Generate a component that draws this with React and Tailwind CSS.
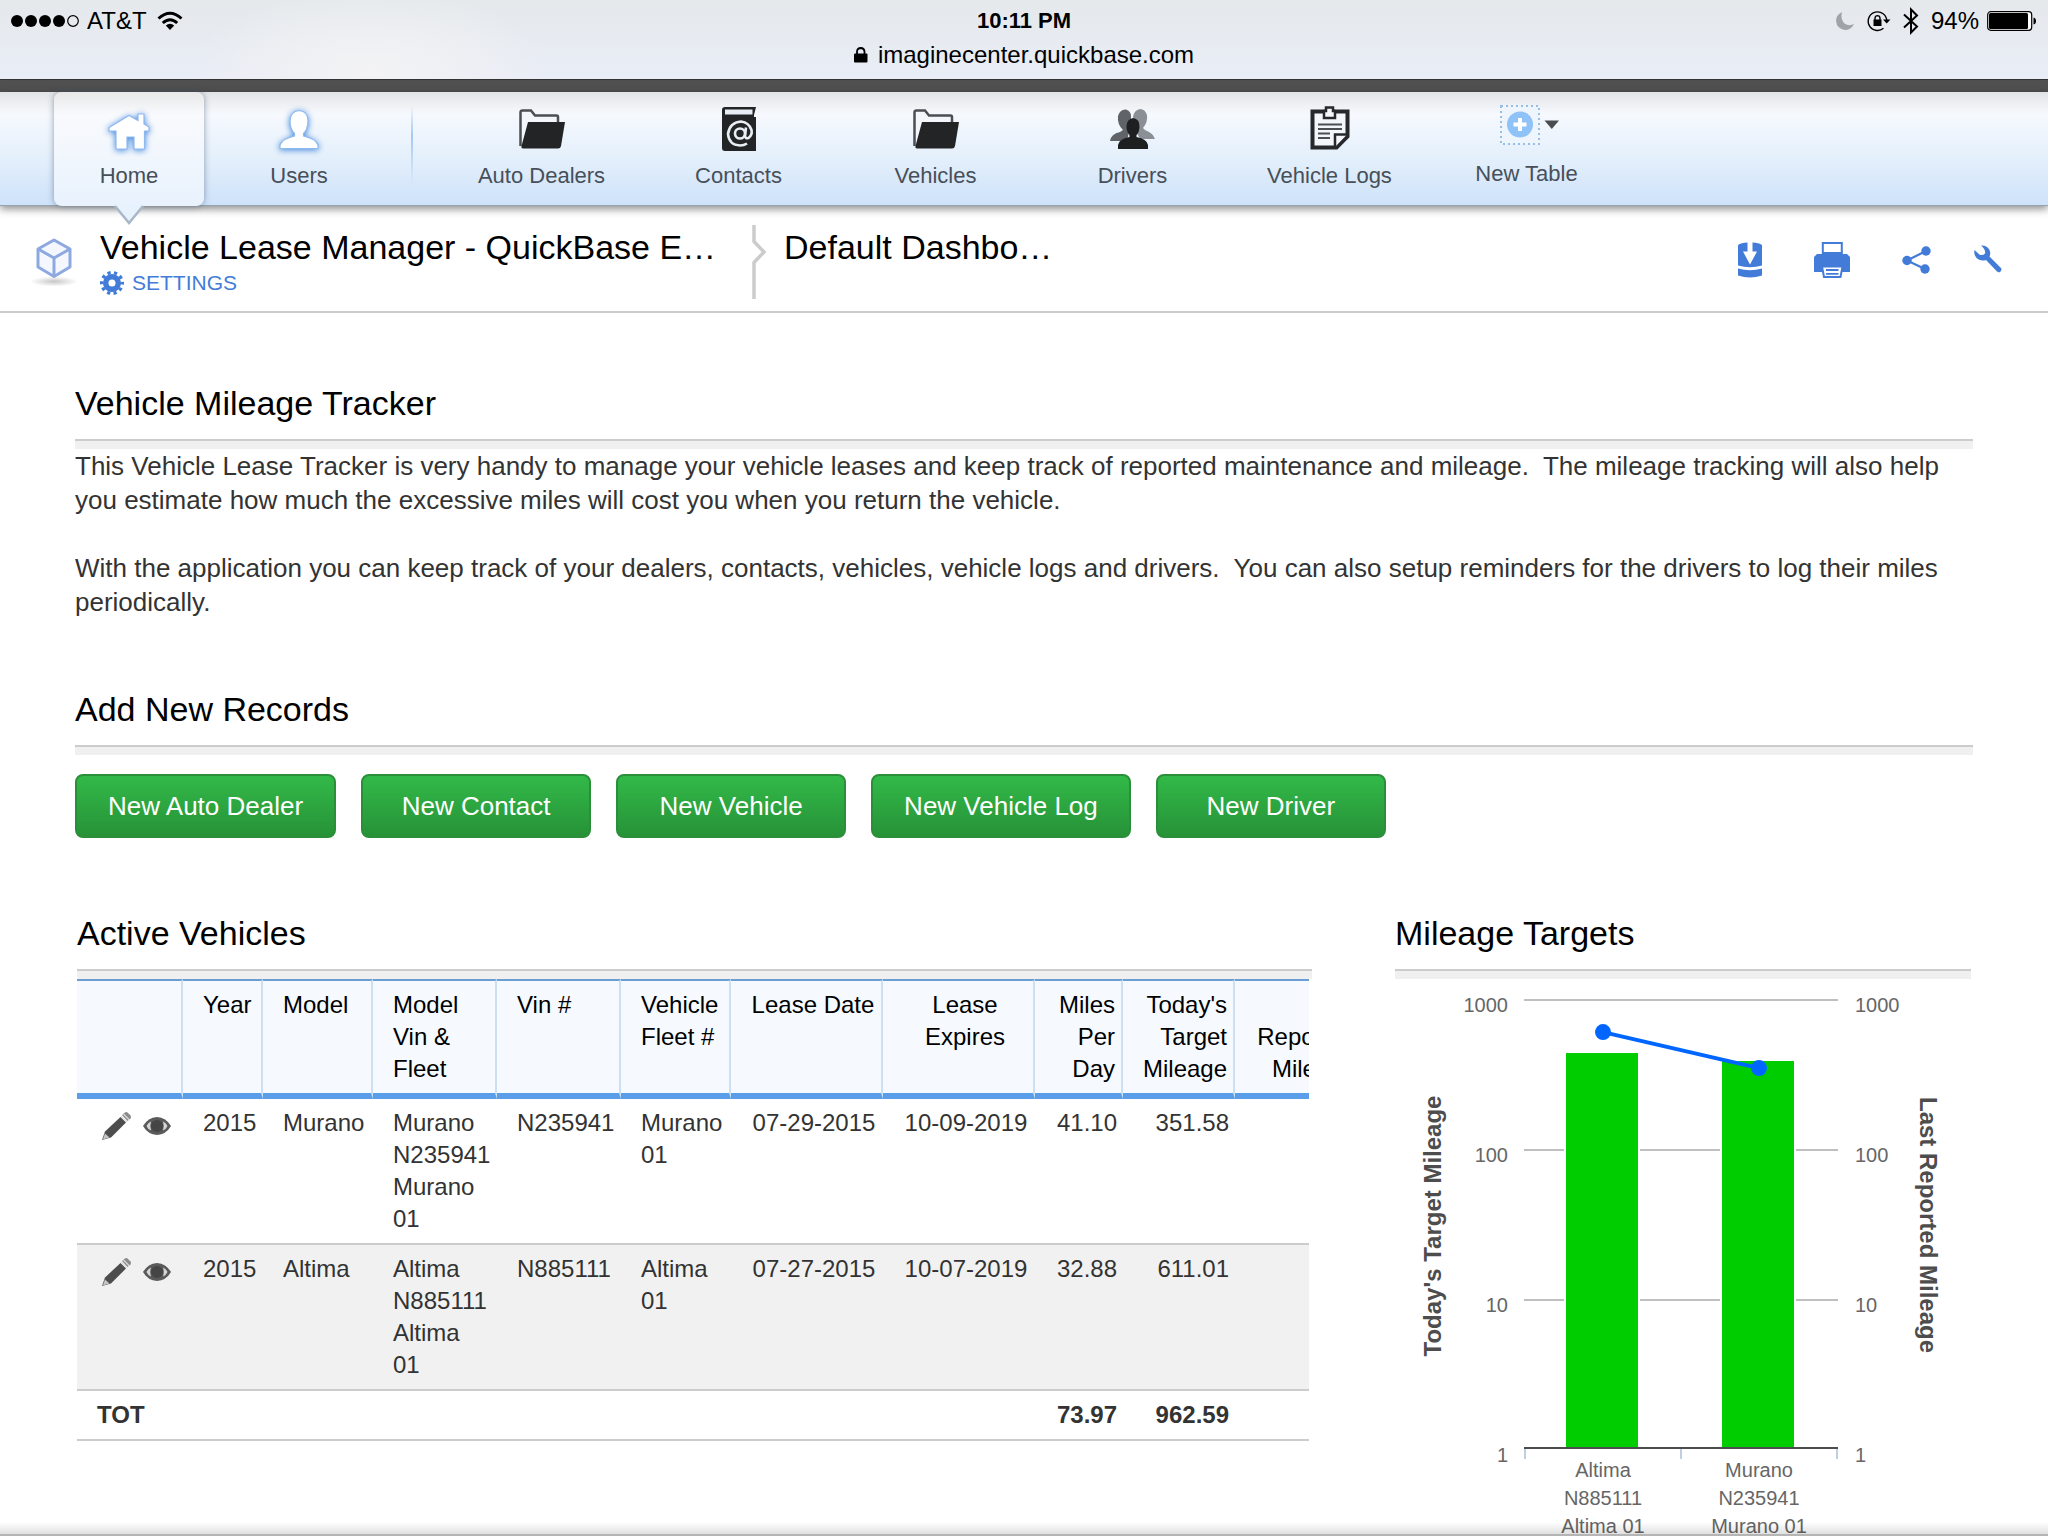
const tables = [
  { name: 'Auto Dealers', icon: 'folder' },
  { name: 'Contacts', icon: 'contacts' },
  { name: 'Vehicles', icon: 'folder' },
  { name: 'Drivers', icon: 'people' },
  { name: 'Vehicle Logs', icon: 'clipboard' },
];

const newRecords = ['New Auto Dealer', 'New Contact', 'New Vehicle', 'New Vehicle Log', 'New Driver'];

const columns = [
  { label: '', width: 106, align: 'text-left' },
  { label: 'Year', width: 80, align: 'text-left' },
  { label: 'Model', width: 110, align: 'text-left' },
  { label: 'Model Vin & Fleet', width: 124, align: 'text-left' },
  { label: 'Vin #', width: 124, align: 'text-left' },
  { label: 'Vehicle Fleet #', width: 110, align: 'text-left' },
  { label: 'Lease Date', width: 152, align: 'text-center' },
  { label: 'Lease Expires', width: 152, align: 'text-center' },
  { label: 'Miles Per Day', width: 88, align: 'text-right' },
  { label: "Today's Target Mileage", width: 112, align: 'text-right' },
  { label: 'Last Reported Mileage', width: 129, align: 'text-right' },
];

const vehicles = [
  ['2015', 'Murano', 'Murano N235941 Murano 01', 'N235941', 'Murano 01', '07-29-2015', '10-09-2019', '41.10', '351.58', ''],
  ['2015', 'Altima', 'Altima N885111 Altima 01', 'N885111', 'Altima 01', '07-27-2015', '10-07-2019', '32.88', '611.01', ''],
];

const chartData = [
  { labels: ['Altima', 'N885111', 'Altima 01'], x: 208, reported: 443, target: 611.01 },
  { labels: ['Murano', 'N235941', 'Murano 01'], x: 364, reported: 392, target: 351.58 },
];

// log scale, 150 units for each decade
const scaleY = (value) => 471 - Math.log10(value) * 150;

const FolderIcon = () => (
  <svg width="48" height="48" viewBox="0 0 48 48">
    <path d="M2.500 41V7.500Q2.500 5.500 4.500 5.500H13L17 10.500H38.500Q40 10.500 40 12V18" fill="#f3f7fc" stroke="#4b4e52" strokeWidth="2.500" />
    <path d="M10 17H47L43 41Q42.500 43.500 40 43.500H5Q3 43.500 3.500 41Z" fill="#222426" />
  </svg>
);

const ContactsIcon = () => (
  <svg width="48" height="48" viewBox="0 0 48 48">
    <path d="M7 5Q7 2 10 2H41L39 10V12H41V46H10Q7 46 7 43Z" fill="#222426" />
    <path d="M10 4.500H37.500V9.500H10Z" fill="#e9eef5" />
    <g fill="none" stroke="#e9eef5" strokeWidth="2.600">
      <circle cx="25" cy="28.500" r="5" />
      <path d="M31 22.500L30 31Q30.500 34 33.500 33Q37.500 30 36.500 25Q34 17.500 26 16.500Q14.500 17.500 13 29Q14 40 25 40.500Q29 40.500 32 38.500" />
    </g>
  </svg>
);

const PeopleIcon = () => (
  <svg width="48" height="48" viewBox="0 0 48 48">
    <path d="M1 36Q2 29 11 27L14 25Q8 19 9 11Q11 4 17 4.500Q23 6 22 14L20 27L18 36Z" fill="#606469" />
    <path d="M46 34Q44 28 36 25L34 23Q39 17 38 10Q36 4 31 4Q25 5 24 12L27 26L31 34Z" fill="#8b9096" />
    <path d="M24 13Q31 14 30.500 22Q30 28 27.500 30V32Q38 34 39 40V44H9V40Q10 34 20.500 32V30Q17.500 27 17.500 21Q18 14 24 13Z" fill="#1d1f21" />
  </svg>
);

const ClipboardIcon = () => (
  <svg width="48" height="48" viewBox="0 0 48 48">
    <path d="M6.500 6.500H41.500V31.500L30.500 42.500H6.500Z" fill="#f3f7fc" stroke="#26282b" strokeWidth="4" />
    <path d="M29 42V29.500H41" fill="#f3f7fc" stroke="#26282b" strokeWidth="2.500" />
    <path d="M20 4V2.500H27V6H29V13H18V6H20Z" fill="#f3f7fc" stroke="#26282b" strokeWidth="2.500" />
    <path d="M12 19.500H36M12 24H36M12 28.500H24M12 33H24" stroke="#4b4e52" strokeWidth="2.200" />
  </svg>
);

const HomeIcon = () => (
  <svg width="48" height="48" viewBox="0 0 48 48" className="drop-shadow-[0_1px_3px_#3f86da]">
    <path d="M24 10.500L33 15.500V9H39V19L44 22V26H39.500V44H29V32H22V44H11V26H4V22.500Z" fill="#fff" stroke="#8fbaf0" strokeWidth="1.200" />
  </svg>
);

const UserIcon = () => (
  <svg width="48" height="48" viewBox="0 0 48 48" className="drop-shadow-[0_1px_3px_#3f86da]">
    <path d="M24 5.500Q33.500 6.500 33 16.500Q32.500 25 28.500 28.500V31Q41 34 43 40V43.500H5V40Q7 34 19.500 31V28.500Q15 24 15 16.500Q15 6.500 24 5.500Z" fill="#fff" stroke="#8fbaf0" strokeWidth="1.200" />
  </svg>
);

const icons = {
  folder: FolderIcon,
  contacts: ContactsIcon,
  people: PeopleIcon,
  clipboard: ClipboardIcon,
};

const StatusBar = () => (
  <div className="h-[79px] shrink-0 bg-[radial-gradient(ellipse_180px_80px_at_370px_70px,#f3f3f4,transparent),linear-gradient(#e5e9ec,#e9edf6)] px-[11px] pt-[6px] text-black">
    <div className="grid grid-cols-3 items-center leading-[30px]">
      <div className="flex items-center">
        <svg width="68" height="14" viewBox="0 0 68 14">
          {[6, 20, 34, 48].map((cx) => (
            <circle key={cx} cx={cx} cy="7" r="6" />
          ))}
          <circle cx="62" cy="7" r="5.300" fill="none" stroke="#000" strokeWidth="1.200" />
        </svg>
        <span className="ml-2 text-[24px]">AT&amp;T</span>
        <svg className="ml-[10px]" width="26" height="20" viewBox="0 0 26 20">
          <g fill="none" stroke="#000" strokeWidth="3">
            <path d="M1.500 7.500Q13 -3 24.500 7.500" />
            <path d="M5.800 12Q13 5.400 20.200 12" />
          </g>
          <path d="M8.800 14.500Q13 11 17.200 14.500L13 19Z" />
        </svg>
      </div>
      <div className="text-center text-[22px] font-bold">10:11 PM</div>
      <div className="flex items-center justify-end">
        <svg width="20" height="20" viewBox="0 0 20 20">
          <path d="M7 1Q1 4 1 10Q2 18 10 19Q16 19 19 13Q14 15.500 9.500 12.500Q5 8 7 1Z" fill="#a0a4a9" />
        </svg>
        <svg className="ml-3" width="24" height="22" viewBox="0 0 24 22">
          <path d="M16.500 18.300A9.300 9.300 0 1 1 19.800 11" fill="none" stroke="#000" strokeWidth="1.400" />
          <path d="M16 9.500H23.500L19.700 13.500Z" />
          <path d="M6.500 9.500H14.500V16H6.500Z" />
          <path d="M8 10V8Q8.200 5.700 10.500 5.600Q12.800 5.700 13 8V10" fill="none" stroke="#000" strokeWidth="1.400" />
        </svg>
        <svg className="ml-3" width="16" height="28" viewBox="0 0 16 28">
          <path d="M1 7.500L14 19.500L8 25.500V2.500L14 8.500L1 20.500" fill="none" stroke="#000" strokeWidth="2" />
        </svg>
        <span className="ml-3 text-[24px]">94%</span>
        <svg className="ml-2" width="50" height="20" viewBox="0 0 50 20">
          <rect x="0.700" y="0.700" width="44" height="18.600" rx="3" fill="#fff" stroke="#000" strokeWidth="1.200" />
          <rect x="2" y="2" width="39" height="16" rx="1.500" />
          <path d="M46.500 6.500Q49 7 49 10Q49 13 46.500 13.500Z" />
        </svg>
      </div>
    </div>
    <div className="mt-1 flex items-center justify-center gap-[10px] text-[24px] leading-[30px]">
      <svg width="14" height="16" viewBox="0 0 14 16">
        <rect y="6.500" width="13.500" height="9" rx="1" />
        <path d="M3 7V4.500Q3.200 1.200 6.800 1Q10.300 1.200 10.500 4.500V7" fill="none" stroke="#000" strokeWidth="1.800" />
      </svg>
      imaginecenter.quickbase.com
    </div>
  </div>
);

const NavBar = () => (
  <nav className="relative z-10 flex h-[114px] shrink-0 border-b border-[#98a3b1] bg-[linear-gradient(#e2e3e5,#ecedf0_8%,#f6f9fe_20%,#e3effb_60%,#cee2fa)] pl-[54px] text-[22px] leading-[28px] text-[#474f59] shadow-[0_3px_8px_rgba(0,0,0,0.45)]">
    <a
      href="#home"
      className="relative flex h-[114px] w-[150px] flex-col items-center gap-[9px] rounded-[8px] bg-[linear-gradient(#e8e8e9,#f9fafd_20%,#e8f2fd)] pt-[13px] shadow-[0_0_6px_rgba(60,80,110,0.55)]"
    >
      <HomeIcon />
      Home
      <svg className="absolute top-[113px] left-[60px]" width="30" height="20" viewBox="0 0 30 20">
        <path d="M0 0L15 18L30 0Z" fill="#e8f2fd" />
        <path d="M1 1L15 18L29 1" fill="none" stroke="#a9b8c9" strokeWidth="2.500" />
      </svg>
    </a>
    <a href="#users" className="ml-5 flex w-[150px] flex-col items-center gap-[9px] pt-[13px]">
      <UserIcon />
      Users
    </a>
    <div className="mt-[13px] mr-[30px] ml-[37px] h-[80px] w-[2px] bg-[linear-gradient(transparent,#a4c8ef_40%,transparent)]" />
    {tables.map(({ name, icon }) => {
      const Icon = icons[icon];
      return (
        <a key={name} href="#table" className="flex w-[197px] flex-col items-center gap-[9px] pt-[13px]">
          <Icon />
          {name}
        </a>
      );
    })}
    <button type="button" className="flex w-[197px] flex-col items-center gap-[9px] pt-[13px]">
      <svg width="64" height="46" viewBox="-4 0 64 46">
        <rect x="2" y="1" width="38" height="38" fill="#eef5fd" stroke="#94bfe9" strokeWidth="2" strokeDasharray="2 3" />
        <circle cx="21" cy="19.500" r="13" fill="#8fc2f6" />
        <path d="M21 13V26M14.500 19.500H27.500" stroke="#fff" strokeWidth="4" />
        <path d="M45.500 15.500H60L52.800 24Z" fill="#4a4d50" />
      </svg>
      New Table
    </button>
  </nav>
);

const TitleBar = () => (
  <header className="flex h-[107px] shrink-0 items-start border-b-2 border-[#ccc] bg-white pr-[46px] pl-[30px]">
    <svg className="mt-[31px]" width="48" height="50" viewBox="0 0 48 50">
      <defs>
        <radialGradient id="floor">
          <stop offset="0" stopColor="#000" stopOpacity="0.220" />
          <stop offset="1" stopColor="#000" stopOpacity="0" />
        </radialGradient>
      </defs>
      <ellipse cx="24" cy="44.500" rx="24" ry="5" fill="url(#floor)" />
      <g fill="#f4f8fe" stroke="#8ea9e0" strokeWidth="3" strokeLinejoin="round">
        <path d="M24 3L40 12V30L24 39.500L8 30V12Z" />
        <path d="M24 39V21L9 12.500M24 21L39 12.500" fill="none" />
      </g>
    </svg>
    <div className="mt-[21px] ml-[22px] w-[652px]">
      <h1 className="truncate text-[34px] leading-[40px] text-black">Vehicle Lease Manager - QuickBase E…</h1>
      <a href="#settings" className="mt-[2px] flex items-center gap-2 text-[21px] leading-[28px] text-[#427cd8]">
        <svg width="24" height="24" viewBox="0 0 24 24">
          <circle cx="12" cy="12" r="6.300" fill="none" stroke="#427cd8" strokeWidth="5.500" />
          <circle cx="12" cy="12" r="10.300" fill="none" stroke="#427cd8" strokeWidth="3.400" strokeDasharray="3.200 3.272" strokeDashoffset="1.600" />
        </svg>
        SETTINGS
      </a>
    </div>
    <svg className="mt-[19px]" width="16" height="74" viewBox="0 0 16 74">
      <path d="M2 0V16.500L12 27L2 37.500V74" fill="none" stroke="#ccc" strokeWidth="3.500" />
    </svg>
    <h2 className="mt-[21px] ml-4 text-[34px] leading-[40px] text-black">Default Dashbo…</h2>
    <div className="mt-[36px] ml-auto flex items-center gap-[52px]">
      <button type="button" aria-label="Download">
        <svg width="24" height="36" viewBox="0 0 24 36" fill="#427cd8">
          <path d="M0 3Q3 0.500 9.500 0.500V9.500H5L12 22.500L19 9.500H14.500V0.500Q21 0.500 24 3V23.500Q12 27 0 23.500Z" />
          <path d="M0 26.500Q12 30 24 26.500V33.500Q12 37.500 0 33.500Z" />
        </svg>
      </button>
      <button type="button" aria-label="Print">
        <svg width="36" height="36" viewBox="0 0 36 36">
          <path d="M3 12H33L36 15V30H0V15Z" fill="#427cd8" />
          <path d="M8.800 11V1H27.800V11Z" fill="#fff" stroke="#427cd8" strokeWidth="2" />
          <path d="M8 24.500H28.500L26.500 35H10Z" fill="#fff" stroke="#427cd8" strokeWidth="2" />
          <path d="M12 28H24.500M12 31.800H24.500" stroke="#427cd8" strokeWidth="1.800" />
        </svg>
      </button>
      <button type="button" aria-label="Share">
        <svg width="30" height="28" viewBox="0 0 30 28">
          <path d="M24 5L5 14.500L23 23" fill="none" stroke="#427cd8" strokeWidth="2.200" />
          <g fill="#427cd8">
            <circle cx="24" cy="5" r="4.700" />
            <circle cx="5" cy="14.500" r="4.700" />
            <circle cx="23" cy="23" r="4.700" />
          </g>
        </svg>
      </button>
    </div>
    <button type="button" aria-label="Customize" className="mt-[39px] ml-[42px]">
      <svg width="28" height="28" viewBox="0 0 28 28">
        <path d="M7 0.500Q13 0 15.500 5Q17 8.500 15.500 11.500L27 23Q28.500 26 25 27.500L23 26.500L12 15Q7 16.500 3 13.500Q-0.500 10 0.500 5L6 10Q9.500 10.500 11 8.500Q12 5 7 0.500Z" fill="#427cd8" />
      </svg>
    </button>
  </header>
);

const SectionHeading = ({ children }) => (
  <>
    <h2 className="pb-[17px] text-[34px] leading-[38px] text-black">{children}</h2>
    <div className="h-[10px] border-t-2 border-[#ccc] bg-[#f0f0f0]" />
  </>
);

const RowActions = () => (
  <div className="flex items-center gap-[11px] pt-1 pl-[5px]">
    <button type="button" aria-label="Edit">
      <svg width="30" height="30" viewBox="0 0 30 30" className="block">
        <path d="M0 29L3 20.500L18.500 6L24 11.500L9 26.500Z" fill="#4d4d4d" />
        <path d="M0.800 28.500L3 22.500L7.500 26.500Z" fill="#c4c4c4" />
        <path d="M20 4L23 1.500Q24.500 0.500 26 2L28.500 4.500Q29.500 6 28.500 7.500L25.500 10Z" fill="#8a8a8a" />
        <path d="M19 5L25 11M21.500 3L27.500 9" stroke="#ddd" strokeWidth="1.100" />
      </svg>
    </button>
    <button type="button" aria-label="View">
      <svg width="28" height="18" viewBox="0 0 28 18" className="block">
        <path d="M0 9Q5 0.500 14 0Q23 0.500 28 9Q23 17.500 14 18Q5 17.500 0 9Z" fill="#5a5a5a" />
        <path d="M3.500 9Q5 5.500 8 4.500Q6.500 9 8 13.500Q5 12.500 3.500 9ZM24.500 9Q23 5.500 20 4.500Q21.500 9 20 13.500Q23 12.500 24.500 9Z" fill="#d6d6d6" />
        <circle cx="14" cy="9" r="6" fill="#454545" />
      </svg>
    </button>
  </div>
);

const VehiclesTable = () => (
  <div className="mr-[3px] overflow-hidden">
    <table className="w-[1287px] table-fixed border-separate border-spacing-0 text-[24px] leading-[32px] text-[#333]">
      <colgroup>
        {columns.map((column) => (
          <col key={column.label} style={{ width: column.width }} />
        ))}
      </colgroup>
      <thead className="bg-[#f6faff] text-black">
        <tr>
          {columns.map((column) => (
            <th
              key={column.label}
              className={`${column.align} border-t-2 border-r-2 border-b-6 border-t-[#6b9fd4] border-r-[#cddff0] border-b-[#5a9de8] py-2 pr-[6px] pl-5 align-top font-normal`}
            >
              {column.label}
            </th>
          ))}
        </tr>
      </thead>
      <tbody>
        {vehicles.map((row) => (
          <tr key={row[3]} className="even:bg-[#f1f1f1]">
            <td className="border-b-2 border-[#ccc] py-2 pl-5 align-top">
              <RowActions />
            </td>
            {row.map((value, i) => (
              <td
                key={columns[i + 1].label}
                className={`${columns[i + 1].align} border-b-2 border-[#ccc] py-2 pr-[6px] pl-5 align-top`}
              >
                {value}
              </td>
            ))}
          </tr>
        ))}
      </tbody>
      <tfoot className="font-bold">
        <tr>
          <td className="border-b-2 border-[#ccc] py-2 pl-5" colSpan={8}>TOT</td>
          <td className="border-b-2 border-[#ccc] py-2 pr-[6px] text-right">73.97</td>
          <td className="border-b-2 border-[#ccc] py-2 pr-[6px] text-right">962.59</td>
          <td className="border-b-2 border-[#ccc]" />
        </tr>
      </tfoot>
    </table>
  </div>
);

const MileageChart = () => (
  <svg className="w-full" viewBox="0 0 576 568" role="img" aria-label="Mileage Targets">
    {[1000, 100, 10, 1].map((tick) => (
      <g key={tick} fontSize="20" fill="#666">
        {tick > 1 && <path d={`M129 ${scaleY(tick)}H443`} stroke="#bfbfbf" strokeWidth="2" />}
        <text x="113" y={scaleY(tick) + 12} textAnchor="end">{tick}</text>
        <text x="460" y={scaleY(tick) + 12}>{tick}</text>
      </g>
    ))}
    {chartData.map(({ labels, x, reported }) => (
      <g key={labels[0]}>
        <rect x={x - 38} y={scaleY(reported) - 1} width="74" height={471 - scaleY(reported)} fill="#00cd00" stroke="#fff" strokeWidth="2" />
        <text fontSize="20" fill="#666" textAnchor="middle">
          {labels.map((label, i) => (
            <tspan key={label} x={x} y={498 + i * 28}>{label}</tspan>
          ))}
        </text>
      </g>
    ))}
    <path d="M130 469V480M286 469V480M442 469V480" stroke="#c0d0e0" strokeWidth="2" />
    <path d="M129 469H443" stroke="#4d4d4d" strokeWidth="2" />
    <polyline points={chartData.map(({ x, target }) => `${x},${scaleY(target)}`).join(' ')} fill="none" stroke="#0066ff" strokeWidth="4" />
    {chartData.map(({ x, target }) => (
      <circle key={x} cx={x} cy={scaleY(target)} r="8" fill="#0066ff" />
    ))}
    <g fontSize="24" fontWeight="bold" fill="#4d4d4d" textAnchor="middle">
      <text transform="translate(46 247) rotate(-90)">Today's Target Mileage</text>
      <text transform="translate(525 246) rotate(90)">Last Reported Mileage</text>
    </g>
  </svg>
);

export default function App() {
  return (
    <div className="flex h-screen flex-col overflow-hidden bg-white font-['Liberation_Sans',Arial,sans-serif]">
      <StatusBar />
      <div className="h-[13px] shrink-0 border-t border-[#333] bg-[#505050]" />
      <NavBar />
      <TitleBar />

      <main className="min-h-0 flex-1 overflow-hidden px-[75px] pt-[71px]">
        <section>
          <SectionHeading>Vehicle Mileage Tracker</SectionHeading>
          <div className="space-y-[34px] text-[26px] leading-[34px] text-[#333]">
            <p>
              This Vehicle Lease Tracker is very handy to manage your vehicle leases and keep track of reported
              maintenance and mileage.&nbsp; The mileage tracking will also help you estimate how much the excessive
              miles will cost you when you return the vehicle.
            </p>
            <p>
              With the application you can keep track of your dealers, contacts, vehicles, vehicle logs and
              drivers.&nbsp; You can also setup reminders for the drivers to log their miles periodically.
            </p>
          </div>
        </section>

        <section className="mt-[71px]">
          <SectionHeading>Add New Records</SectionHeading>
          <div className="mt-[19px] flex gap-[25px]">
            {newRecords.map((label) => (
              <button
                key={label}
                type="button"
                className="h-[64px] min-w-[230px] rounded-[8px] border-2 border-[#2b8f3a] bg-[linear-gradient(#32b948,#279238)] px-[31px] text-[26px] text-white"
              >
                {label}
              </button>
            ))}
          </div>
        </section>

        <div className="mt-[76px] grid grid-cols-[1235fr_576fr] gap-[83px] px-[2px]">
          <section className="min-w-0">
            <SectionHeading>Active Vehicles</SectionHeading>
            <VehiclesTable />
          </section>
          <section className="min-w-0">
            <SectionHeading>Mileage Targets</SectionHeading>
            <MileageChart />
          </section>
        </div>
      </main>

      <div className="pointer-events-none fixed inset-x-0 bottom-0 h-[14px] border-b-2 border-[#b5b5b5] bg-[linear-gradient(transparent,rgba(0,0,0,0.12))]" />
    </div>
  );
}
